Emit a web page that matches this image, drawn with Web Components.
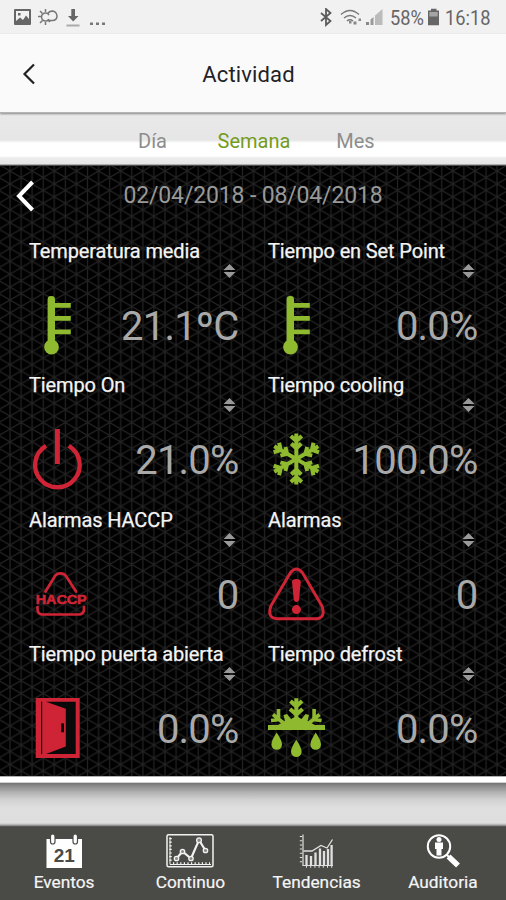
<!DOCTYPE html>
<html lang="es">
<head>
<meta charset="utf-8">
<meta name="viewport" content="width=device-width, initial-scale=1">
<title>Actividad</title>
<style>
  body {
    margin: 0;
    font-family: Roboto, "Noto Sans", sans-serif;
    background: #dedede;
    overflow: hidden;
  }
</style>
</head>
<body>
<activity-app></activity-app>

<script>
const ARM = '<path d="M0 0V-25.5M-5.5-23L0-18L5.5-23M-5-15.500L0-10.500L5-15.500"/>';

// Iconos de las tarjetas, todos en un lienzo de 60x60
const ICONS = {
  thermometer: `
    <g fill="#8fb92f">
      <rect x="18.6" y="0" width="7.4" height="52" rx="3.4"/>
      <circle cx="22.5" cy="51" r="7.4"/>
      <path d="M25 7h16.8v4.8H25zM25 20h16.8v4.8H25zM25 33.4h16.8v4.8H25z"/>
    </g>`,
  power: `
    <g fill="none" stroke="#cf2435">
      <path stroke-width="4.4" d="M17 15.8A22.3 22.3 0 1 0 39.8 15.8"/>
      <path stroke-width="5" d="M28.4-1V34"/>
    </g>`,
  snow: `
    <g transform="translate(28.3 29)" fill="none" stroke="#8fb92f" stroke-width="4">
      ${[0, 60, 120, 180, 240, 300].map((a) => `<g transform="rotate(${a})">${ARM}</g>`).join("")}
    </g>`,
  haccp: `
    <g fill="none" stroke="#cf2435" stroke-width="2.7" stroke-linecap="round">
      <path d="M16.5 26.5L26 11Q28 8.3 31.5 8.3Q35 8.3 37 11L47 26.5"/>
      <path d="M8.5 42V44Q8.5 49.5 14 49.5H49.5Q55 49.5 55 44V42"/>
    </g>
    <text x="6.7" y="39.3" textLength="51" lengthAdjust="spacingAndGlyphs" fill="#cf2435" stroke="#cf2435" stroke-width=".6" font-family="Liberation Sans, sans-serif" font-weight="700" font-size="13">HACCP</text>`,
  alert: `
    <path fill="none" stroke="#cf2435" stroke-width="3" d="M22.2 8Q28.4 0 34.6 8L54 41Q58 53.5 48 53.8H9Q-1 53.5 2.8 41Z"/>
    <path fill="#cf2435" d="M24 17Q24 14 28.4 14Q32.8 14 32.8 17L31 35Q30.6 37 28.4 37Q26.2 37 25.8 35Z"/>
    <circle cx="28.4" cy="44.6" r="4.5" fill="#cf2435"/>`,
  door: `
    <rect x="6.7" y="-1" width="44" height="60" fill="#cf2435"/>
    <path fill="#0a0a0a" d="M17 2.7H46.7V55H17L36.8 47.5V9.8Z"/>
    <path stroke="#0a0a0a" stroke-width="1.2" d="M12.6 2.7V55"/>
    <rect x="32.2" y="24.3" width="2.8" height="9" fill="#0a0a0a"/>`,
  defrost: `
    <g fill="none" stroke="#8fb92f" stroke-width="4">
      <path d="M28.3-.7V27M22.5 2L28.3 7.5L34.1 2M22 10L28.3 15.5L34.6 10"/>
      <path d="M18 26L5 15.5M10.500 10V19.500M3 21.500L12.500 20.500M38.600 26L51.600 15.500M46.100 10V19.500M53.600 21.500L44.100 20.500" stroke-width="3.6"/>
    </g>
    <g fill="#8fb92f">
      <path d="M0 26H10L17 22L15.500 16L19 15L23 20L28.300 17L33.500 20L37.500 15L41 16L39.500 22L47 26H57V31H0Z"/>
      <path id="drop" d="M8.700 33.500Q3.400 41.500 3.400 45.500A5.300 5.300 0 0 0 14 45.500Q14 41.500 8.700 33.500Z"/>
      <use href="#drop" x="19.600" y="7.200"/>
      <use href="#drop" x="39"/>
    </g>`,
};

const NAV_ICONS = {
  events: `
    <path fill="#fff" d="M6.500 5H42V34H6.500Z"/>
    <g fill="#fff" stroke="#4a4a47" stroke-width="1.200">
      <rect x="10.500" y="0" width="4.500" height="10" rx="2.200"/>
      <rect x="33" y="0" width="4.500" height="10" rx="2.200"/>
    </g>
    <text x="24.200" y="27.500" text-anchor="middle" fill="#4a4a47" font-family="Liberation Sans, sans-serif" font-weight="700" font-size="19">21</text>`,
  continuous: `
    <g fill="none" stroke="#f2f2f2">
      <rect x="1" y=".8" width="46" height="32" rx="1.500" stroke-width="1.500"/>
      <path stroke-width="1" d="M4 3V30.500H45"/>
      <path stroke-width="2.500" stroke-dasharray="1.200 2.400" d="M4.500 4V28M7 29.500H44"/>
      <path stroke-width="2.200" d="M10.500 24.500L16.500 17.500L25 24.500L33 6L39.500 16.500"/>
    </g>
    <g fill="#8a8a87" stroke="#f2f2f2" stroke-width="1.300">
      <circle cx="10.500" cy="24.500" r="2.200"/><circle cx="16.500" cy="17.500" r="2.200"/>
      <circle cx="25" cy="24.500" r="2.200"/><circle cx="33" cy="6.200" r="2.400"/>
      <circle cx="39.500" cy="16.500" r="2.200"/>
    </g>`,
  trends: `
    <g fill="none" stroke="#e0e0e0">
      <path stroke-width="1.200" d="M10 .5V31.500H40"/>
      <path stroke-width="2.400" stroke-dasharray="1 3.200" d="M8 2V30M13 32.500H40"/>
      <path stroke-width="2.300" d="M13.500 31V21M18 31V22M22.500 31V18.500M27 31V14.500M31 31V17M35 31V15M38.600 31V11"/>
      <path stroke-width="1.300" d="M10.500 17L19 17L28 11.500L34 14L39.500 5.500"/>
    </g>`,
  audit: `
    <g fill="none" stroke="#fff">
      <circle cx="20" cy="12.500" r="11.200" stroke-width="2"/>
      <path stroke-width="2" d="M27.500 20.500L31 24"/>
      <path stroke-width="5.600" d="M29.500 22.500L39 31.500"/>
    </g>
    <g fill="#fff">
      <circle cx="20" cy="5.500" r="2.500"/>
      <path d="M16 8.500H24V15H22.500V21.500H17.500V15H16Z"/>
    </g>`,
};

// Base: vuelca la plantilla de cada componente en su shadow root
class BaseElement extends HTMLElement {
  constructor() {
    super();
    this.attachShadow({ mode: "open" });
  }
  connectedCallback() {
    this.shadowRoot.innerHTML = this.template();
  }
}

class StatusBar extends BaseElement {
  template() {
    return `
      <style>
        :host {
          display: flex; justify-content: space-between; box-sizing: border-box;
          height: 34px; padding: 8px 15px 0 14px; background: #f1f1f1; color: #666;
        }
        .side { display: flex; height: 20px; align-items: center; }
        svg { display: block; }
        .text { width: 35px; font-size: 21px; line-height: 20px; white-space: nowrap; }
        .text span { display: block; transform: scaleX(.87); transform-origin: 0 50%; }
        .time { width: 46px; }
      </style>
      <div class="side">
        <svg width="94" height="20" viewBox="0 0 94 20">
          <path fill="#666" fill-rule="evenodd" d="M1 1H16Q17 1 17 2V16Q17 17 16 17H1Q0 17 0 16V2Q0 1 1 1ZM2 3V13L6 9.500L9 12L12 7.500L15 11V3ZM4 5H6.500V7.500H4Z"/>
          <g fill="none" stroke="#777" stroke-width="1.500">
            <path d="M33 12.500H39Q43 12 43 8Q42.500 3.500 38.500 3Q35 3 33.500 6"/>
            <path d="M35 11A4 4 0 1 1 35 7"/>
            <path d="M24 8.500H27M26 3L28.500 5.500M31.500 1V4M26 15L28.500 12.500M31.500 14V17M36 14L34.500 12.500"/>
          </g>
          <path fill="#666" d="M57.300 1H61V8H64.500L59.200 13.500L54 8H57.300Z"/>
          <path fill="#aaa" d="M52.500 16.500H65.500V18.500H52.500Z"/>
          <path fill="#777" d="M76 14.500h3v2.500h-3zM82 14.500h3v2.500h-3zM88 14.500h3v2.500h-3z"/>
        </svg>
      </div>
      <div class="side">
        <svg width="70" height="20" viewBox="1 0 70 20">
          <path fill="none" stroke="#5c5c5c" stroke-width="1.800" d="M2 5L11.500 13L7 17V1L11.500 5L2 13"/>
          <g fill="none" stroke="#777" stroke-width="1.500">
            <path d="M22 6.500Q31 -1.500 40 6.500"/><path d="M25 10Q31 5 37 10"/><path d="M28 13Q31 10.500 34 13"/>
          </g>
          <path fill="#888" d="M30 13h2.500v2.500H30zM34.500 13.500h3v3h-3zM39.500 10.500h2.500v2.500h-2.500zM47 14h3v3h-3z"/>
          <path fill="#999" d="M51.500 11.500L54.500 9V17H51.500Z"/>
          <path fill="#bbb" d="M56 7.500L63.500 1V17H56Z"/>
        </svg>
        <div class="text"><span>58%</span></div>
        <svg width="20" height="20" viewBox="0 0 20 20">
          <path fill="#666" fill-rule="evenodd" d="M6 .8H11.500V2.500H14V17.300H3V2.500H6Z"/>
          <path fill="#a5a5a5" d="M4.300 4H12.700V8.500H4.300Z"/>
        </svg>
        <div class="text time"><span>16:18</span></div>
      </div>`;
  }
}

class AppHeader extends BaseElement {
  template() {
    return `
      <style>
        :host {
          display: grid; grid-template-columns: 60px 1fr 60px; align-items: center;
          box-sizing: border-box; height: 79px; padding-top: 2px; background: #fafafa;
          border-bottom: 1px solid #b4b4b4; box-shadow: 0 1px 2px #888; z-index: 1; position: relative;
        }
        h1 {
          margin: 2px 0 0 -9px; text-align: center; font-size: 22px; font-weight: 400;
          line-height: 28px; color: #1f2226; letter-spacing: .15px;
        }
        h1 { margin-left: -9px; }
        svg { display: block; margin-left: 21px; }
      </style>
      <svg width="16" height="22" viewBox="0 0 16 22"><path d="M13 1.500L3.500 11L13 20.500" fill="none" stroke="#222" stroke-width="2.200"/></svg>
      <h1><slot></slot></h1>`;
  }
}

class PeriodTabs extends BaseElement {
  template() {
    return `
      <style>
        :host {
          display: flex; justify-content: center; box-sizing: border-box; height: 53px;
          padding: 16px 0 0 2px; font-size: 20px; line-height: 24px; color: #8d8d8d;
          background: linear-gradient(#e9e9e9 0, #e6e6e6 27px, #fff 30px, #fff 43px, #ececec 45px, #e6e6e6 51px, #777 52px, #222 53px);
        }
      </style>
      <slot></slot>`;
  }
}

class PeriodTab extends BaseElement {
  template() {
    return `
      <style>
        :host { display: block; width: 101.500px; text-align: center; }
        :host([active]) { color: #749c1c; }
      </style>
      <slot></slot>`;
  }
}

class MetricCard extends BaseElement {
  template() {
    return `
      <style>
        :host {
          display: grid; grid-template-columns: 60px 1fr; grid-template-rows: 22px 18px 1fr;
          min-width: 0;
        }
        .title {
          grid-column: 1 / 3; font-size: 20px; line-height: 22px; letter-spacing: -.13px;
          color: #f4f4f4; -webkit-text-stroke: .25px #f4f4f4; white-space: nowrap;
        }
        .sort { grid-column: 2; justify-self: end; margin: 2px 4px 0 0; }
        .icon { grid-column: 1; margin-top: 16px; overflow: visible; }
        .value {
          margin-top: 23px; padding-right: 1.500px; text-align: right; font-size: 40px; line-height: 48px;
          letter-spacing: -.8px; color: #a9a9a9; white-space: nowrap;
        }
      </style>
      <div class="title">${this.getAttribute("name")}</div>
      <svg class="sort" width="13" height="14" viewBox="0 0 13 14">
        <path fill="#999" d="M6.500 0L12.500 6H.5ZM.5 8H12.500L6.500 14Z"/>
      </svg>
      <svg class="icon" width="60" height="60" viewBox="0 0 60 60">${ICONS[this.getAttribute("icon")]}</svg>
      <div class="value">${this.getAttribute("value")}</div>`;
  }
}

class MetricsPanel extends BaseElement {
  template() {
    return `
      <style>
        :host {
          display: grid; grid-template-rows: 74px 1fr; box-sizing: border-box;
          height: 610px; position: relative; background: #000;
        }
        .mesh { position: absolute; inset: 0; width: 100%; height: 100%; }
        .dates, .grid { position: relative; }
        .dates {
          display: grid; grid-template-columns: 60px 1fr 60px; padding: 16px 0 0;
          color: #999; font-size: 23px; line-height: 28px; letter-spacing: -.15px; text-align: center;
        }
        .dates svg { margin: -2px 0 0 15px; }
        .grid {
          display: grid; grid-template-columns: 211px 211px; grid-template-rows: repeat(4, 134.300px);
          column-gap: 28px; padding-left: 29px;
        }
      </style>
      <svg class="mesh">
        <defs>
          <pattern id="tri" x="10" y="5" width="22.140" height="12.900" patternUnits="userSpaceOnUse">
            <path d="M0 0V12.900M22.140 0V12.900M11.070 0V12.900M0 0L22.140 12.900M22.140 0L0 12.900" fill="none" stroke="#222" stroke-width="1.300"/>
          </pattern>
        </defs>
        <rect width="100%" height="100%" fill="url(#tri)"/>
      </svg>
      <div class="dates">
        <svg width="22" height="32" viewBox="0 0 22 32"><path d="M17.500 2L4 16L17.500 30" fill="none" stroke="#fff" stroke-width="4"/></svg>
        <span>${this.getAttribute("range")}</span>
      </div>
      <div class="grid"><slot></slot></div>`;
  }
}

class BottomNav extends BaseElement {
  template() {
    return `
      <style>
        :host { display: block; }
        .shade {
          height: 51px;
          background: linear-gradient(#888 0, #fff 1.500px, #fff 6px, #777 7.500px, #8b8b8b 10px, #b5b5b5 17px, #d2d2d2 24px, #dfdfdf 32px, #dedede 47px, #aaa 49px, #3c3c3a 51px);
        }
        nav { display: flex; height: 73px; padding-left: 1px; background: #4a4a47; }
      </style>
      <div class="shade"></div>
      <nav><slot></slot></nav>`;
  }
}

class NavItem extends BaseElement {
  template() {
    return `
      <style>
        :host {
          display: flex; flex-direction: column; align-items: center; flex: 1 1 0;
          padding-top: 7px; gap: 3px; color: #f5f5f5; font-size: 17.300px; line-height: 22px;
          -webkit-text-stroke: .2px #f5f5f5;
        }
        svg { overflow: visible; -webkit-text-stroke: 0; }
      </style>
      <svg width="48" height="34" viewBox="0 0 48 34">${NAV_ICONS[this.getAttribute("icon")]}</svg>
      <span><slot></slot></span>`;
  }
}

class ActivityApp extends BaseElement {
  template() {
    return `
      <style>
        :host { display: flex; flex-direction: column; width: 506px; height: 900px; overflow: hidden; }
      </style>
      <status-bar></status-bar>
      <app-header>Actividad</app-header>
      <period-tabs>
        <period-tab>Día</period-tab>
        <period-tab active>Semana</period-tab>
        <period-tab>Mes</period-tab>
      </period-tabs>
      <metrics-panel range="02/04/2018 - 08/04/2018">
        <metric-card name="Temperatura media" icon="thermometer" value="21.1ºC"></metric-card>
        <metric-card name="Tiempo en Set Point" icon="thermometer" value="0.0%"></metric-card>
        <metric-card name="Tiempo On" icon="power" value="21.0%"></metric-card>
        <metric-card name="Tiempo cooling" icon="snow" value="100.0%"></metric-card>
        <metric-card name="Alarmas HACCP" icon="haccp" value="0"></metric-card>
        <metric-card name="Alarmas" icon="alert" value="0"></metric-card>
        <metric-card name="Tiempo puerta abierta" icon="door" value="0.0%"></metric-card>
        <metric-card name="Tiempo defrost" icon="defrost" value="0.0%"></metric-card>
      </metrics-panel>
      <bottom-nav>
        <nav-item icon="events">Eventos</nav-item>
        <nav-item icon="continuous">Continuo</nav-item>
        <nav-item icon="trends">Tendencias</nav-item>
        <nav-item icon="audit">Auditoria</nav-item>
      </bottom-nav>`;
  }
}

customElements.define("status-bar", StatusBar);
customElements.define("app-header", AppHeader);
customElements.define("period-tabs", PeriodTabs);
customElements.define("period-tab", PeriodTab);
customElements.define("metric-card", MetricCard);
customElements.define("metrics-panel", MetricsPanel);
customElements.define("bottom-nav", BottomNav);
customElements.define("nav-item", NavItem);
customElements.define("activity-app", ActivityApp);
</script>
</body>
</html>
